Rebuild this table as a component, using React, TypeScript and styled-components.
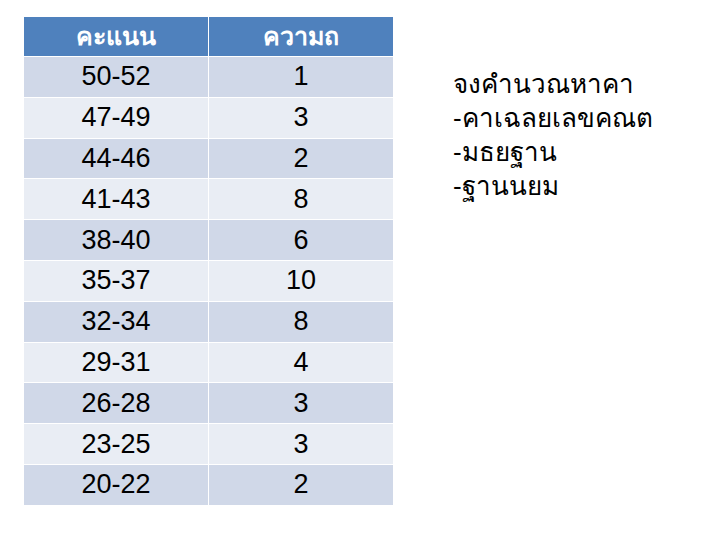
import React from "react";
import styled, { createGlobalStyle } from "styled-components";

const GlobalStyle = createGlobalStyle`
  html, body {
    margin: 0;
    padding: 0;
    background: #ffffff;
  }
`;

const rows: [string, number][] = [
  ["50-52", 1],
  ["47-49", 3],
  ["44-46", 2],
  ["41-43", 8],
  ["38-40", 6],
  ["35-37", 10],
  ["32-34", 8],
  ["29-31", 4],
  ["26-28", 3],
  ["23-25", 3],
  ["20-22", 2],
];

const Page = styled.div`
  width: 720px;
  height: 540px;
  display: flex;
  align-items: flex-start;
  padding: 17px 0 0 23px;
  box-sizing: border-box;
  font-family: "Liberation Sans", Arial, sans-serif;
`;

const Table = styled.table`
  border-collapse: collapse;
  width: 371px;
  table-layout: fixed;
`;

const HeadCell = styled.th`
  background: #4f81bd;
  color: #ffffff;
  font-weight: bold;
  font-size: 25px;
  height: 39px;
  padding: 0;
  text-align: center;
  border: 1px solid #ffffff;
  border-top: none;
  line-height: 1;
`;

const Cell = styled.td<{ $odd: boolean }>`
  background: ${(p) => (p.$odd ? "#e9edf4" : "#d0d8e8")};
  color: #000000;
  font-size: 27px;
  height: 39.8px;
  padding: 0;
  text-align: center;
  border: 1px solid #ffffff;
  line-height: 1;
`;

const Notes = styled.div`
  margin: 50px 0 0 59px;
  font-size: 26px;
  line-height: 34px;
  color: #000000;
`;

const NoteLine = styled.div`
  white-space: nowrap;
`;

export default function App() {
  return (
    <>
      <GlobalStyle />
      <Page>
        <Table>
          <thead>
            <tr>
              <HeadCell>คะแนน</HeadCell>
              <HeadCell>ความถ</HeadCell>
            </tr>
          </thead>
          <tbody>
            {rows.map(([range, freq], i) => (
              <tr key={range}>
                <Cell $odd={i % 2 === 1}>{range}</Cell>
                <Cell $odd={i % 2 === 1}>{freq}</Cell>
              </tr>
            ))}
          </tbody>
        </Table>
        <Notes>
          <NoteLine>จงคำนวณหาคา</NoteLine>
          <NoteLine>-คาเฉลยเลขคณต</NoteLine>
          <NoteLine>-มธยฐาน</NoteLine>
          <NoteLine>-ฐานนยม</NoteLine>
        </Notes>
      </Page>
    </>
  );
}
